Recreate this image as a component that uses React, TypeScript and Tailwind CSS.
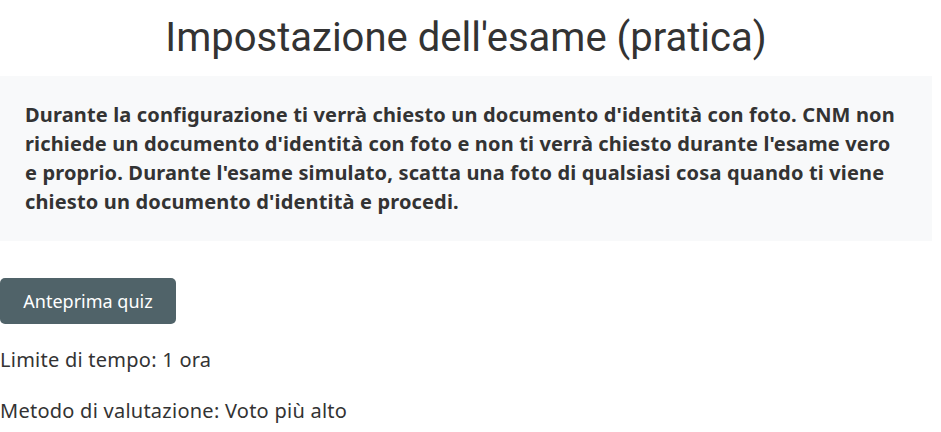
export default function App() {
  return (
    <div className="w-[932px] bg-white text-[#333333]" style={{ fontFamily: '"Noto Sans", "Open Sans", sans-serif' }}>
      <h1 className="text-center text-[40px] leading-[48px] pt-[14px] pb-[14px] font-normal" style={{ fontFamily: 'Roboto, sans-serif' }}>
        Impostazione dell'esame (pratica)
      </h1>
      <div className="bg-[#f8f9fa] px-[25px] pt-[24px] h-[165px]">
        <p className="text-[20px] leading-[29px] font-bold tracking-[0.15px]">
          Durante la configurazione ti verrà chiesto un documento d'identità con foto. CNM non richiede un documento d'identità con foto e non ti verrà chiesto durante l'esame vero e proprio. Durante l'esame simulato, scatta una foto di qualsiasi cosa quando ti viene chiesto un documento d'identità e procedi.
        </p>
      </div>
      <div className="pt-[37px]">
        <button className="h-[46px] w-[176px] rounded-[5px] bg-[#506369] text-white text-[18px]">
          Anteprima quiz
        </button>
      </div>
      <p className="text-[20px] leading-[27px] mt-[22px] tracking-[0.25px]">Limite di tempo: 1 ora</p>
      <p className="text-[20px] leading-[27px] mt-[24px] tracking-[0.25px]">Metodo di valutazione: Voto più alto</p>
    </div>
  );
}
